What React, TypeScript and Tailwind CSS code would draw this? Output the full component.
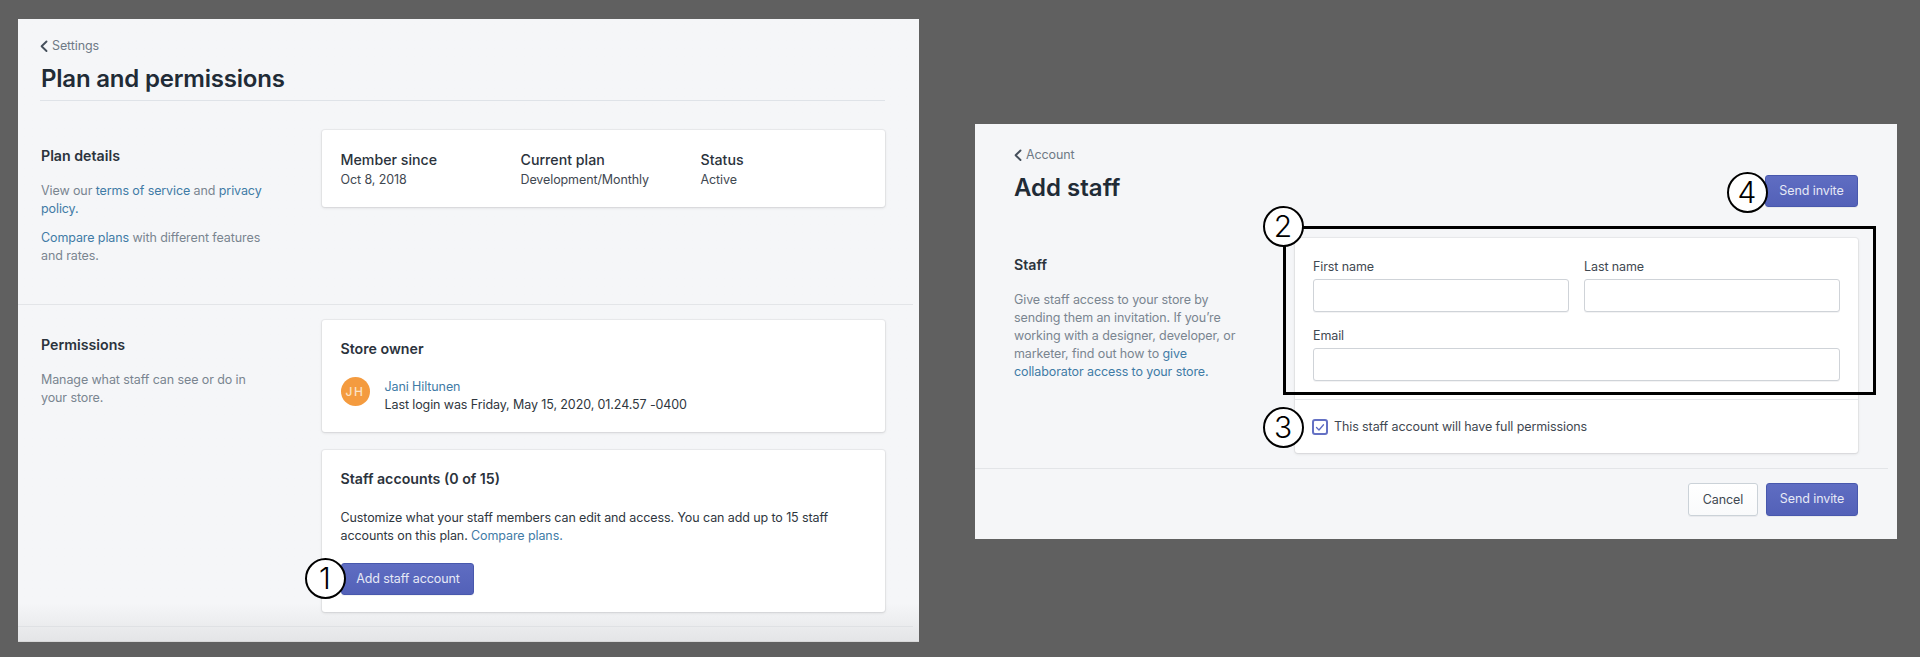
import React from "react";

const cardCls = "bg-white rounded-[3px] shadow-[0_0_0_1px_rgba(63,63,68,0.05),0_1px_3px_0_rgba(63,63,68,0.15)]";
const linkCls = "text-[#3f7ba6]";
const bodyCls = "text-[12.5px] tracking-[-0.1px] leading-[18px]";
const primaryCls = "flex items-center justify-center rounded-[3px] bg-gradient-to-b from-[#5f6dc2] to-[#5361b8] border border-[#4858ad] text-[12.5px] tracking-[-0.1px] text-[#e6e9f6] shadow-[0_1px_0_0_rgba(22,29,37,0.05)]";

function Back({ label }: { label: string }) {
  return (
    <div className={`flex items-center h-[18px] ${bodyCls} text-[#6f7a86]`}>
      <svg width="10" height="13" viewBox="0 0 10 13" className="mr-[3px] -ml-[1px]" fill="none">
        <path d="M7.5 1.5 2.6 6.3 7.5 11" stroke="#454f5b" strokeWidth="1.9" strokeLinecap="round" strokeLinejoin="round" />
      </svg>
      <span>{label}</span>
    </div>
  );
}

function Circle({ n, x, y }: { n: number; x: number; y: number }) {
  return (
    <div
      className="absolute w-[41px] h-[41px] rounded-full border-2 border-black bg-white flex items-center justify-center text-[30px] font-light text-black leading-none"
      style={{ left: x - 20.5, top: y - 20.5 }}
    >
      {n}
    </div>
  );
}

function Input({ className = "" }: { className?: string }) {
  return <div className={`h-[33px] bg-white rounded-[3px] border border-[#cfd3d8] shadow-[0_1px_0_0_rgba(22,29,37,0.05)] ${className}`} />;
}

export default function App() {
  return (
    <div className="relative w-[1920px] h-[657px] overflow-hidden bg-[#606060] flex items-start font-['Inter',sans-serif] text-[#212b36]">
      {/* Left panel */}
      <div className="ml-[18px] mt-[19px] w-[901px] h-[623px] bg-gradient-to-b from-[#f5f6f8] from-[94%] to-[#e4e5e7] border-b border-[#d8d8d8] shrink-0">
        <div className="ml-[22px] mr-[34px] pt-[18px] pb-[5px] border-b border-[#dfe3e8]">
          <Back label="Settings" />
          <h1 className="mt-[8px] ml-[1px] text-[24px] leading-[32px] font-semibold tracking-[-0.2px]">Plan and permissions</h1>
        </div>
        <div className="h-[204px] pt-[29px] pl-[23px] flex border-b border-[#e3e5e8] mr-[6px]">
          <div className="w-[281px] pt-[16px] shrink-0">
            <h2 className="text-[14.2px] leading-[20px] font-semibold text-[#2b333c]">Plan details</h2>
            <p className={`mt-[16px] w-[226px] ${bodyCls} text-[#7a8590]`}>
              View our <span className={linkCls}>terms of service</span> and <span className={linkCls}>privacy policy.</span>
            </p>
            <p className={`mt-[11px] w-[226px] ${bodyCls} text-[#7a8590]`}>
              <span className={linkCls}>Compare plans</span> with different features and rates.
            </p>
          </div>
          <div className={`${cardCls} w-[563px] h-[77px] px-[18.5px] pt-[20px] grid grid-cols-[180px_180px_1fr]`}>
            {[["Member since", "Oct 8, 2018"], ["Current plan", "Development/Monthly"], ["Status", "Active"]].map(([a, b]) => (
              <div key={a}>
                <div className="text-[14.2px] leading-[20px] font-medium text-[#2b333c]">{a}</div>
                <div className={`${bodyCls} leading-[20px] text-[#3f4851]`}>{b}</div>
              </div>
            ))}
          </div>
        </div>
        <div className="pt-[15px] pl-[23px] flex">
          <div className="w-[281px] pt-[15px] shrink-0">
            <h2 className="text-[14.2px] leading-[20px] font-semibold text-[#2b333c]">Permissions</h2>
            <p className={`mt-[16px] w-[226px] ${bodyCls} text-[#7a8590]`}>Manage what staff can see or do in your store.</p>
          </div>
          <div className="w-[563px] flex flex-col gap-[18px]">
            <div className={`${cardCls} h-[112px] px-[18.5px] pt-[19px]`}>
              <h3 className="text-[14.2px] leading-[20px] font-semibold text-[#2b333c]">Store owner</h3>
              <div className="mt-[18px] flex gap-[15px]">
                <div className="w-[29px] h-[29px] rounded-full bg-[#f49b3f] text-[#fbe3c6] text-[12px] tracking-[1.5px] font-medium flex items-center justify-center">JH</div>
                <div className={`pt-[1px] ${bodyCls} text-[#2f3740]`}>
                  <div className={linkCls}>Jani Hiltunen</div>
                  <div>Last login was Friday, May 15, 2020, 01.24.57 -0400</div>
                </div>
              </div>
            </div>
            <div className={`${cardCls} h-[162px] px-[18.5px] pt-[19px]`}>
              <h3 className="text-[14.2px] leading-[20px] font-semibold text-[#2b333c]">Staff accounts (0 of 15)</h3>
              <p className={`mt-[20px] w-[510px] ${bodyCls} text-[#2f3740]`}>
                Customize what your staff members can edit and access. You can add up to 15 staff accounts on this plan. <span className={linkCls}>Compare plans.</span>
              </p>
              <div className={`${primaryCls} mt-[18px] w-[133px] h-[32px] pl-[2px]`}>Add staff account</div>
            </div>
          </div>
        </div>
        <div className="mt-[14px] mr-[6px] border-t border-[#dfe1e4]" />
      </div>

      {/* Right panel */}
      <div className="ml-[56px] mt-[124px] w-[922px] h-[415px] bg-[#f5f6f8] shrink-0">
        <div className="px-[39px] pt-[22px]">
          <Back label="Account" />
          <div className="mt-[8px] flex justify-between items-start">
            <h1 className="text-[24px] leading-[32px] font-semibold">Add staff</h1>
            <div className={`${primaryCls} mt-[3px] w-[93px] h-[32px]`}>Send invite</div>
          </div>
          <div className="mt-[31px] flex">
            <div className="w-[281px] pt-[17px] shrink-0">
              <h2 className="text-[14.2px] leading-[20px] font-semibold text-[#2b333c]">Staff</h2>
              <p className={`mt-[16px] w-[226px] ${bodyCls} text-[#7a8590]`}>
                Give staff access to your store by sending them an invitation. If you’re working with a designer, developer, or marketer, find out how to <span className={linkCls}>give collaborator access to your store.</span>
              </p>
            </div>
            <div className={`${cardCls} w-[563px] h-[215px]`}>
              <div className="px-[18px] pt-[20px] pb-[18px] border-b border-[#e6e8eb]">
                <div className="grid grid-cols-2 gap-x-[15px]">
                  <div>
                    <div className={`${bodyCls} text-[#3f4851]`}>First name</div>
                    <Input className="mt-[3px]" />
                  </div>
                  <div>
                    <div className={`${bodyCls} text-[#3f4851]`}>Last name</div>
                    <Input className="mt-[3px]" />
                  </div>
                </div>
                <div className={`mt-[15px] ${bodyCls} text-[#3f4851]`}>Email</div>
                <Input className="mt-[3px]" />
              </div>
              <div className="h-[54px] pl-[17px] flex items-center gap-[6px]">
                <div className="w-[16px] h-[16px] rounded-[3px] border-2 border-[#6471c4] bg-white flex items-center justify-center">
                  <svg width="10" height="9" viewBox="0 0 10 9" fill="none">
                    <path d="M1.5 4.5 4 7 8.5 1.8" stroke="#5c6ac4" strokeWidth="1.3" strokeLinecap="round" strokeLinejoin="round" />
                  </svg>
                </div>
                <span className={`${bodyCls} text-[#3f4851]`}>This staff account will have full permissions</span>
              </div>
            </div>
          </div>
        </div>
        <div className="mt-[15px] mr-[9px] border-t border-[#e3e5e8]" />
        <div className="mt-[14px] pr-[39px] flex justify-end gap-[8px]">
          <div className={`w-[70px] h-[33px] flex items-center justify-center rounded-[3px] bg-gradient-to-b from-white to-[#f9fafb] border border-[#cbd2d8] shadow-[0_1px_0_0_rgba(22,29,37,0.05)] ${bodyCls} text-[#3f4851]`}>Cancel</div>
          <div className={`${primaryCls} w-[92px] h-[33px]`}>Send invite</div>
        </div>
      </div>

      {/* Annotations */}
      <div className="absolute left-[1283px] top-[226px] w-[593px] h-[169px] border-[3px] border-black" />
      <Circle n={1} x={325} y={578} />
      <Circle n={2} x={1283} y={226} />
      <Circle n={3} x={1283} y={427} />
      <Circle n={4} x={1747} y={192} />
    </div>
  );
}
